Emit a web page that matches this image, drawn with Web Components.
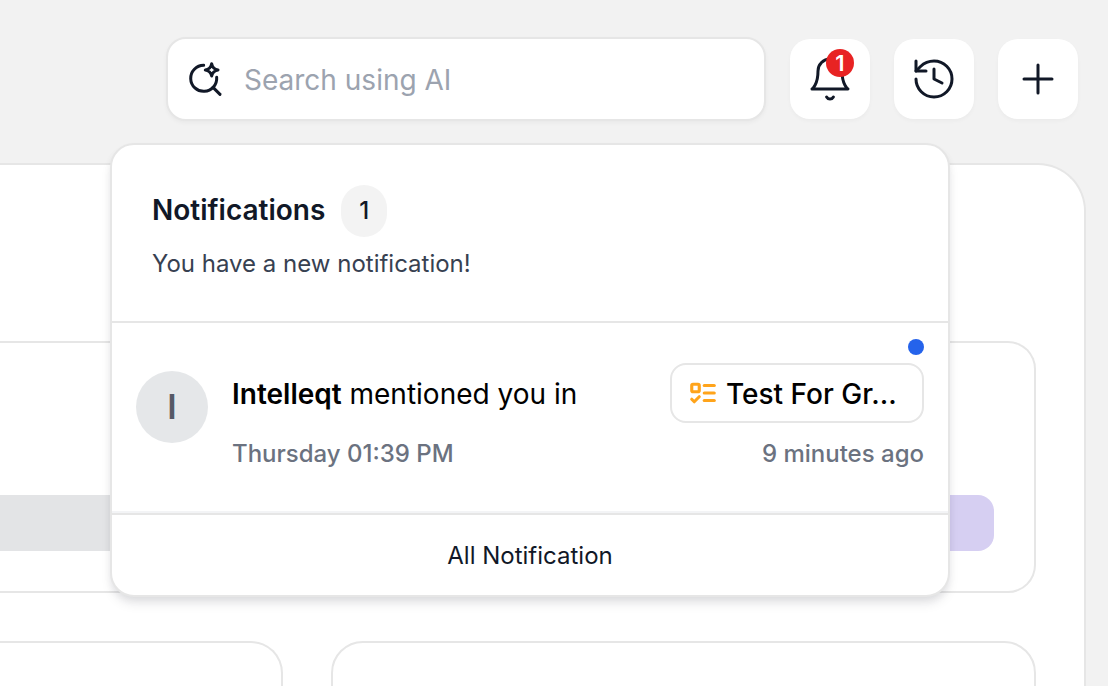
<!DOCTYPE html>
<html lang="en">
<head>
  <meta charset="UTF-8">
  <meta name="viewport" content="width=device-width, initial-scale=1.0">
  <title>Dashboard</title>
  <style>
    :root {
      --ink: #111827;
      --line: #e6e6e6;
      --page: #f2f2f2;
    }

    body {
      margin: 0;
      height: 100vh;
      overflow: hidden;
      background: var(--page);
      color: var(--ink);
      font-family: Inter, "Liberation Sans", sans-serif;
      font-optical-sizing: none;
    }
  </style>
</head>
<body>
  <app-shell>
    <search-box slot="toolbar" placeholder="Search using AI"></search-box>
    <icon-button slot="toolbar" icon="bell" label="Notifications" badge="1"></icon-button>
    <icon-button slot="toolbar" icon="history" label="History"></icon-button>
    <icon-button slot="toolbar" icon="plus" label="Create"></icon-button>

    <dashboard-board></dashboard-board>

    <notification-panel slot="overlay" count="1">
      <span slot="summary">You have a new notification!</span>
      <notification-item initial="I" time="Thursday 01:39 PM" ago="9 minutes ago">
        <b>Intelleqt</b> mentioned you in
        <task-chip slot="target">Test For Gr...</task-chip>
      </notification-item>
    </notification-panel>
  </app-shell>

  <script>
    const ICONS = {
      bell: `<path d="M6 8a6 6 0 0 1 12 0c0 7 3 9 3 9H3s3-2 3-9"/><path d="M10.3 21a1.94 1.94 0 0 0 3.4 0"/>`,
      history: `<path d="M3 12a9 9 0 1 0 9-9 9.75 9.75 0 0 0-6.74 2.74L3 8"/><path d="M3 3v5h5"/><path d="M12 7v5l4 2"/>`,
      plus: `<path d="M5 12h14"/><path d="M12 5v14"/>`,
    };

    class AppShell extends HTMLElement {
      constructor() {
        super();
        this.attachShadow({ mode: "open" });
      }

      connectedCallback() {
        this.shadowRoot.innerHTML = /*html*/ `
          <style>
            :host {
              display: flex;
              flex-direction: column;
              height: 100%;
              position: relative;
            }

            header {
              display: flex;
              justify-content: flex-end;
              align-items: center;
              gap: 24px;
              padding: 37px 30px 42px;
            }

            main {
              flex: 1;
              min-height: 0;
              display: flex;
              padding-right: 22px;
            }

            /* Dropdown floats over the board */
            .overlay {
              position: absolute;
              top: 143px;
              right: 158px;
              width: 840px;
            }
          </style>

          <header><slot name="toolbar"></slot></header>
          <main><slot></slot></main>
          <div class="overlay"><slot name="overlay"></slot></div>
        `;
      }
    }

    class SearchBox extends HTMLElement {
      constructor() {
        super();
        this.attachShadow({ mode: "open" });
      }

      connectedCallback() {
        const placeholder = this.getAttribute("placeholder");
        this.shadowRoot.innerHTML = /*html*/ `
          <style>
            :host { display: block; flex: 0 1 600px; }

            label {
              display: flex;
              align-items: center;
              gap: 20px;
              height: 84px;
              box-sizing: border-box;
              padding: 0 20px;
              background: #fff;
              border: 2px solid var(--line);
              border-radius: 20px;
              box-shadow: 0 2px 4px rgba(0, 0, 0, 0.04);
            }

            svg { width: 36px; height: 36px; flex: none; }

            input {
              flex: 1;
              min-width: 0;
              padding: 2px 0 0;
              border: 0;
              outline: 0;
              background: none;
              color: inherit;
              font: inherit;
              font-size: 28px;
              font-optical-sizing: none;
            }

            input::placeholder { color: #9ca3af; opacity: 1; }
          </style>

          <label>
            <svg viewBox="84 93 108 108" fill="none" stroke="#111827" stroke-width="9" stroke-linecap="round" stroke-linejoin="round" aria-hidden="true">
              <path d="M131 106A39 39 0 1 0 170 142"/>
              <path d="M159 172L180 193"/>
              <path d="M155 101Q158 117 174 120Q158 123 155 138Q152 123 136 120Q152 117 155 101Z"/>
            </svg>
            <input type="text" placeholder="${placeholder}" aria-label="${placeholder}">
          </label>
        `;
      }
    }

    class IconButton extends HTMLElement {
      constructor() {
        super();
        this.attachShadow({ mode: "open" });
      }

      connectedCallback() {
        const badge = this.getAttribute("badge");
        this.shadowRoot.innerHTML = /*html*/ `
          <style>
            :host { display: block; flex: none; }

            button {
              position: relative;
              display: grid;
              place-items: center;
              width: 80px;
              height: 80px;
              padding: 0;
              border: 0;
              border-radius: 20px;
              background: #fff;
              color: var(--ink);
              font: inherit;
              box-shadow: 0 2px 4px rgba(0, 0, 0, 0.03);
              cursor: pointer;
            }

            svg { width: 48px; height: 48px; }

            .badge {
              position: absolute;
              top: 10px;
              right: 16px;
              width: 28px;
              height: 28px;
              border-radius: 50%;
              background: #e82323;
              color: #fff;
              font-size: 22px;
              font-weight: 600;
              line-height: 28px;
              text-align: center;
            }
          </style>

          <button type="button" aria-label="${this.getAttribute("label")}">
            <svg viewBox="0 0 24 24" fill="none" stroke="currentColor" stroke-width="1.5" stroke-linecap="round" stroke-linejoin="round" aria-hidden="true">
              ${ICONS[this.getAttribute("icon")]}
            </svg>
            ${badge ? `<span class="badge">${badge}</span>` : ""}
          </button>
        `;
      }
    }

    class DashboardBoard extends HTMLElement {
      constructor() {
        super();
        this.attachShadow({ mode: "open" });
      }

      connectedCallback() {
        this.shadowRoot.innerHTML = /*html*/ `
          <style>
            :host {
              flex: 1;
              display: flex;
              flex-direction: column;
              gap: 48px;
              box-sizing: border-box;
              padding: 176px 48px 0 0;
              overflow: hidden;
              background: #fff;
              border: 2px solid var(--line);
              border-width: 2px 2px 0 0;
              border-top-right-radius: 48px;
            }

            .card {
              box-sizing: border-box;
              border: 2px solid var(--line);
              border-radius: 32px;
            }

            /* Cards that run off the left side of the view */
            .card.open {
              border-left: 0;
              border-top-left-radius: 0;
              border-bottom-left-radius: 0;
            }

            .progress {
              display: flex;
              align-items: flex-end;
              flex: none;
              height: 252px;
              padding: 0 40px 40px 0;
              border-radius: 28px;
            }

            .bar { flex: 1; height: 56px; background: #e3e4e6; }
            .bar.accent { background: #d6cff2; border-radius: 0 16px 16px 0; }

            .row { flex: 1; display: flex; gap: 48px; }
            .row .card { height: 320px; flex: 1; }
            .row .card.open { flex: 0 0 283px; }
          </style>

          <section class="card open progress">
            <div class="bar"></div>
            <div class="bar accent"></div>
          </section>
          <div class="row">
            <section class="card open"></section>
            <section class="card"></section>
          </div>
        `;
      }
    }

    class NotificationPanel extends HTMLElement {
      constructor() {
        super();
        this.attachShadow({ mode: "open" });
      }

      connectedCallback() {
        this.shadowRoot.innerHTML = /*html*/ `
          <style>
            :host {
              display: block;
              background: #fff;
              border: 2px solid var(--line);
              border-radius: 24px;
              box-sizing: border-box;
              box-shadow: 0 8px 12px -2px rgba(17, 24, 39, 0.1), 0 4px 8px -2px rgba(17, 24, 39, 0.08);
            }

            header {
              display: flex;
              flex-direction: column;
              gap: 8px;
              padding: 40px 40px 38px;
              border-bottom: 2px solid var(--line);
            }

            .title { display: flex; align-items: center; gap: 16px; }

            h2 { margin: 0; padding-bottom: 2px; font-size: 28px; font-weight: 600; line-height: 36px; }

            .count {
              padding: 8px 18px;
              border-radius: 24px;
              background: #f3f3f3;
              font-size: 24px;
              font-weight: 500;
              line-height: 36px;
            }

            .summary { margin: 0; color: #374151; font-size: 24px; line-height: 38px; }

            footer { border-top: 2px solid var(--line); }

            footer a {
              display: block;
              padding-top: 2px;
              color: inherit;
              font-size: 24px;
              line-height: 78px;
              text-align: center;
              text-decoration: none;
            }
          </style>

          <header>
            <div class="title">
              <h2>Notifications</h2>
              <span class="count">${this.getAttribute("count")}</span>
            </div>
            <p class="summary"><slot name="summary"></slot></p>
          </header>
          <slot></slot>
          <footer><a href="#all">All Notification</a></footer>
        `;
      }
    }

    class NotificationItem extends HTMLElement {
      constructor() {
        super();
        this.attachShadow({ mode: "open" });
      }

      connectedCallback() {
        this.shadowRoot.innerHTML = /*html*/ `
          <style>
            :host {
              display: flex;
              flex-direction: column;
              gap: 8px;
              padding: 16px 24px 38px;
              border-bottom: 2px solid #f3f4f6;
            }

            .unread {
              align-self: flex-end;
              width: 16px;
              height: 16px;
              border-radius: 50%;
              background: #2563eb;
            }

            .body { display: flex; gap: 24px; }

            .avatar {
              flex: none;
              width: 72px;
              height: 72px;
              margin-top: 8px;
              border-radius: 50%;
              background: #e5e7e9;
              color: #565966;
              font-size: 34px;
              font-weight: 600;
              line-height: 72px;
              text-align: center;
            }

            .text { flex: 1; display: flex; flex-direction: column; gap: 12px; }

            .line { display: flex; justify-content: space-between; align-items: center; }

            .message { margin: 0; padding-top: 2px; color: #000; font-size: 28px; line-height: 36px; }
            ::slotted(b) { font-weight: 600; }

            .meta { color: #6b7280; font-size: 24px; font-weight: 500; line-height: 38px; }
          </style>

          <span class="unread"></span>
          <div class="body">
            <div class="avatar">${this.getAttribute("initial")}</div>
            <div class="text">
              <div class="line">
                <p class="message"><slot></slot></p>
                <slot name="target"></slot>
              </div>
              <div class="line meta">
                <span>${this.getAttribute("time")}</span>
                <span>${this.getAttribute("ago")}</span>
              </div>
            </div>
          </div>
        `;
      }
    }

    class TaskChip extends HTMLElement {
      constructor() {
        super();
        this.attachShadow({ mode: "open" });
      }

      connectedCallback() {
        this.shadowRoot.innerHTML = /*html*/ `
          <style>
            :host { display: block; }

            a {
              display: flex;
              align-items: center;
              gap: 8px;
              width: 254px;
              height: 60px;
              box-sizing: border-box;
              padding: 0 16px;
              border: 2px solid var(--line);
              border-radius: 16px;
              color: #000;
              font-size: 28px;
              font-weight: 500;
              text-decoration: none;
              white-space: nowrap;
            }

            svg { width: 30px; height: 30px; flex: none; color: #ffa41b; }

            .name { padding-top: 2px; line-height: 36px; }
          </style>

          <a href="#task">
            <svg viewBox="0 0 24 24" fill="none" stroke="currentColor" stroke-width="2.5" stroke-linecap="round" stroke-linejoin="round" aria-hidden="true">
              <rect x="3" y="5" width="6" height="6" rx="1"/>
              <path d="m3 17 2 2 4-4"/>
              <path d="M13 6h8"/>
              <path d="M13 12h8"/>
              <path d="M13 18h8"/>
            </svg>
            <span class="name"><slot></slot></span>
          </a>
        `;
      }
    }

    customElements.define("app-shell", AppShell);
    customElements.define("search-box", SearchBox);
    customElements.define("icon-button", IconButton);
    customElements.define("dashboard-board", DashboardBoard);
    customElements.define("notification-panel", NotificationPanel);
    customElements.define("notification-item", NotificationItem);
    customElements.define("task-chip", TaskChip);
  </script>
</body>
</html>
